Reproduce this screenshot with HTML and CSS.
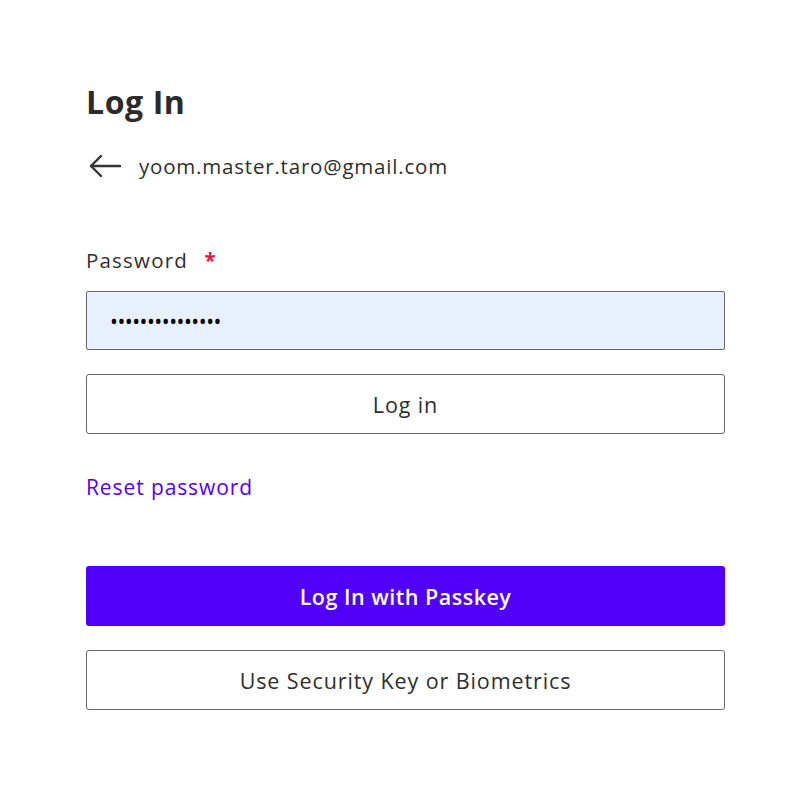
FILE: index.html
```html
<!DOCTYPE html>
<html>
<head>
<meta charset="utf-8">
<link rel="stylesheet" href="styles.css">
</head>
<body>
<main class="card">
  <h1 class="title">Log In</h1>
  <div class="account">
    <svg class="back" width="34" height="24" viewBox="0 0 34 24" fill="none" stroke="#333" stroke-width="2.4" stroke-linecap="round" stroke-linejoin="round">
      <path d="M32 12H3"/>
      <path d="M13 2L3 12l10 10"/>
    </svg>
    <span class="email">yoom.master.taro@gmail.com</span>
  </div>
  <label class="label">Password <span class="req">*</span></label>
  <div class="input"><span class="dots">•••••••••••••••</span></div>
  <button class="btn outline">Log in</button>
  <a class="link">Reset password</a>
  <button class="btn primary">Log In with Passkey</button>
  <button class="btn outline">Use Security Key or Biometrics</button>
</main>
</body>
</html>
```
FILE: styles.css
```css
* { box-sizing: border-box; }
html, body { margin: 0; background: #fff; }
body { font-family: "Open Sans", "Lato", sans-serif; color: #2e2e2e; }
.card { padding: 80px 79px 0 86px; display: flex; flex-direction: column; }
.title { margin: 0; font-size: 32px; font-weight: 700; line-height: 44px; color: #2b2b2b; letter-spacing: 0.6px; }
.account { display: flex; align-items: center; margin-top: 27px; height: 30px; }
.back { margin-left: 2px; margin-right: 17px; }
.email { font-size: 20.5px; letter-spacing: 0.8px; }
.label { margin-top: 65px; font-size: 20.5px; line-height: 28px; letter-spacing: 1.2px; }
.req { color: #e0144c; margin-left: 10px; font-weight: 700; }
.input { margin-top: 17px; height: 59px; background: #e8f0fe; border: 1px solid #666; border-radius: 2px; display: flex; align-items: center; padding-left: 23px; font-size: 21px; color: #000; letter-spacing: -0.5px; }
.btn { width: 100%; height: 60px; font-family: inherit; font-size: 21.5px; border-radius: 3px; cursor: pointer; }
.outline { background: #fff; border: 1px solid #666; color: #2e2e2e; margin-top: 24px; letter-spacing: 0.9px; }
.link { margin-top: 38px; font-size: 21px; color: #5200ff; line-height: 30px; letter-spacing: 0.9px; }
.primary { margin-top: 64px; background: #5000f8; color: #fff; border: none; font-weight: 600; letter-spacing: 0.5px; }
.primary + .outline { margin-top: 24px; }
```
